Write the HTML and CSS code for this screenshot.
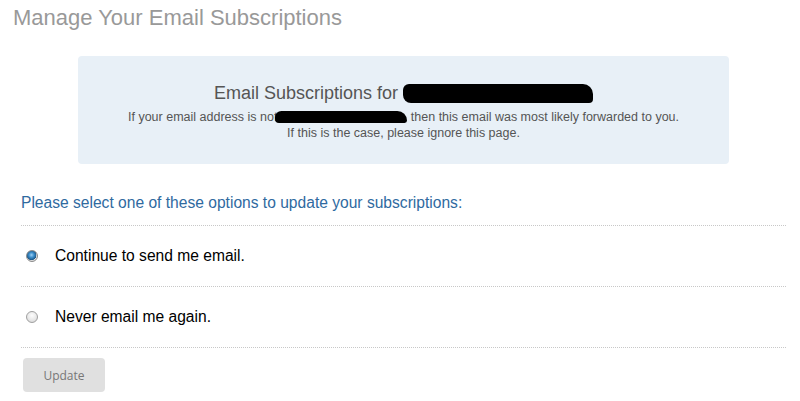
FILE: index.html
```html
<!DOCTYPE html>
<html lang="en">
<head>
<meta charset="utf-8">
<title>Manage Your Email Subscriptions</title>
<link rel="stylesheet" href="styles.css">
</head>
<body>
<div class="page">
  <h1 class="title">Manage Your Email Subscriptions</h1>
  <div class="content">
    <div class="panel">
      <h2 class="panel-heading">Email Subscriptions for <span class="redact redact-heading"></span></h2>
      <p class="panel-text">If your email address is not<span class="redact redact-line"></span> then this email was most likely forwarded to you.<br>If this is the case, please ignore this page.</p>
    </div>
    <form class="options">
      <p class="prompt">Please select one of these options to update your subscriptions:</p>
      <label class="option">
        <input class="radio" type="radio" name="sub" checked>
        <span class="option-label">Continue to send me email.</span>
      </label>
      <label class="option">
        <input class="radio" type="radio" name="sub">
        <span class="option-label">Never email me again.</span>
      </label>
      <div class="actions">
        <button class="btn" type="button">Update</button>
      </div>
    </form>
  </div>
</div>
</body>
</html>
```

FILE: styles.css
```css
html, body {
  margin: 0;
  padding: 0;
  background: #fff;
}

body {
  font-family: "Liberation Sans", Arial, sans-serif;
  color: #000;
}

.page {
  padding: 5px 14px 0 13px;
}

.title {
  margin: 0;
  font-size: 22px;
  line-height: 25px;
  font-weight: normal;
  color: #999;
}

.content {
  padding-left: 8px;
}

.panel {
  margin: 26px 57px 0 57px;
  background: #e8f0f7;
  border-radius: 4px;
  padding: 27px 10px 23px;
  text-align: center;
  color: #555;
}

.panel-heading {
  margin: 0;
  font-size: 18px;
  line-height: 20px;
  font-weight: normal;
  color: #555;
}

.panel-text {
  margin: 6px 0 0;
  font-size: 12.5px;
  line-height: 16px;
}

.redact {
  display: inline-block;
  background: #000;
}

.redact-heading {
  width: 190px;
  height: 19px;
  vertical-align: -4px;
  border-radius: 6px 10px 4px 8px;
}

.redact-line {
  width: 132px;
  height: 12px;
  vertical-align: -2px;
  border-radius: 8px 12px 3px 5px;
  margin-left: -2px;
}

.options {
  margin: 29px 0 0;
}

.prompt {
  margin: 0;
  padding-bottom: 12px;
  font-size: 15.6px;
  line-height: 20px;
  color: #2f6a9f;
  border-bottom: 1px dotted #c8c8c8;
}

.option {
  display: flex;
  align-items: center;
  padding: 20px 0;
  border-bottom: 1px dotted #c8c8c8;
  font-size: 15.6px;
  line-height: 20px;
  cursor: pointer;
}

.radio {
  appearance: none;
  -webkit-appearance: none;
  margin: 0 17px 0 5px;
  width: 12px;
  height: 12px;
  border-radius: 50%;
  border: 1px solid #a0a0a0;
  background: radial-gradient(circle at 50% 35%, #fdfdfd 0%, #e8e8e8 55%, #cfcfcf 100%);
  box-sizing: border-box;
  flex: none;
}

.radio:checked {
  border-color: #8a8a8a;
  background:
    radial-gradient(circle at 45% 40%, #9fd0f2 0%, #3d8fcc 30%, #1d5685 60%, transparent 62%),
    radial-gradient(circle, #f2f2f2 0%, #d4d4d4 100%);
}

.option-label {
  color: #000;
}

.actions {
  padding-top: 10px;
}

.btn {
  margin-left: 2px;
  width: 82px;
  height: 34px;
  border: 0;
  border-radius: 4px;
  background: #e0e0e0;
  color: #777;
  font-family: "Open Sans", "DejaVu Sans", sans-serif;
  font-size: 12px;
  padding: 0;
}
```
